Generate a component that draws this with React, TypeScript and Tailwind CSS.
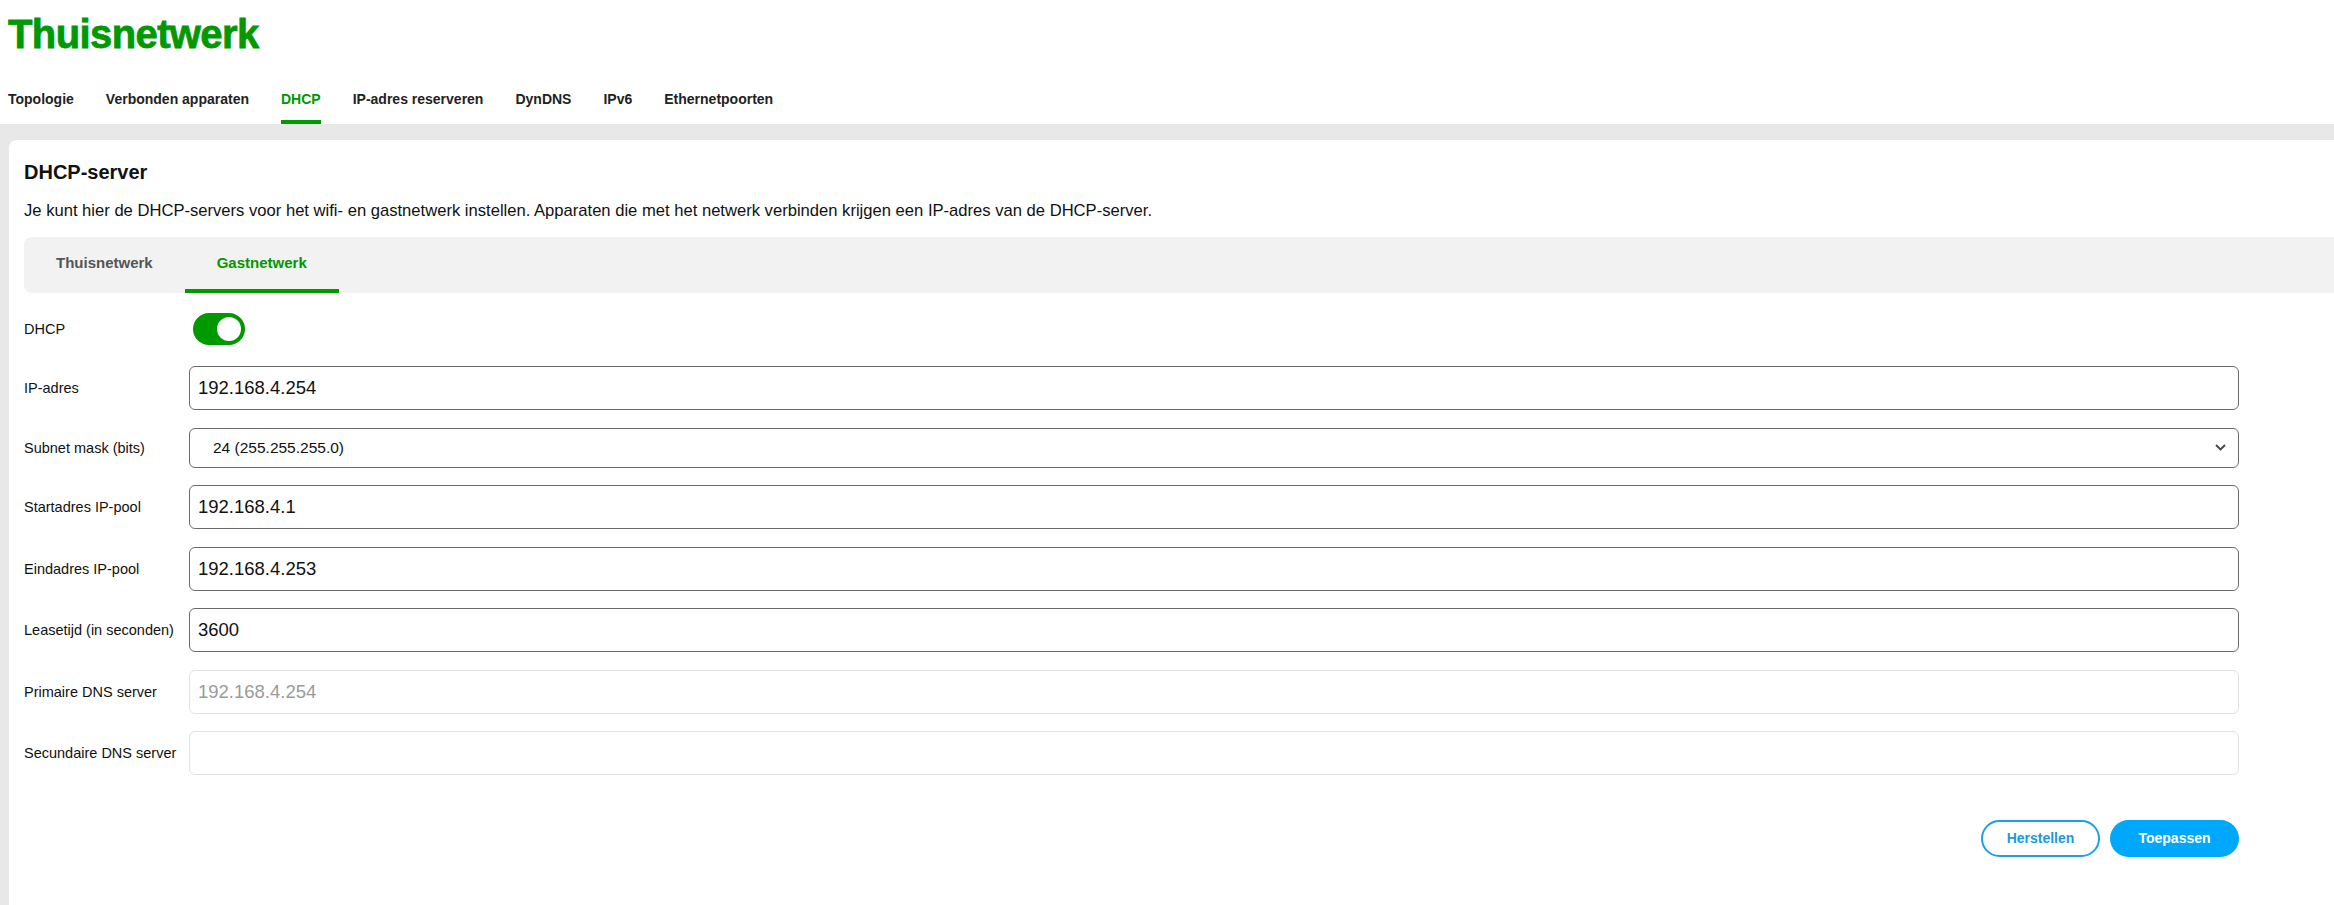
import React from "react";

const navItems = [
  "Topologie",
  "Verbonden apparaten",
  "DHCP",
  "IP-adres reserveren",
  "DynDNS",
  "IPv6",
  "Ethernetpoorten",
];

function Row({ label, children }: { label: string; children: React.ReactNode }) {
  return (
    <div className="flex items-center">
      <div className="w-[165px] shrink-0 text-[14.5px] leading-[20px] text-[#111]">{label}</div>
      {children}
    </div>
  );
}

function TextInput({ value, disabled, light }: { value: string; disabled?: boolean; light?: boolean }) {
  return (
    <input
      readOnly
      disabled={disabled}
      defaultValue={value}
      className={
        light
          ? "h-[44px] flex-1 rounded-[6px] border border-[#e2e2e2] bg-white px-[8px] text-[18.5px] text-[#9a9a9a] outline-none"
          : "h-[44px] flex-1 rounded-[6px] border border-[#6b6b6b] bg-white px-[8px] text-[18.5px] text-[#111] outline-none"
      }
    />
  );
}

export default function App() {
  return (
    <div className="flex h-[905px] w-[2334px] flex-col overflow-hidden bg-white font-['Liberation_Sans',Arial,sans-serif]">
      <header className="pl-[8px] pt-[14px]">
        <h1 className="text-[40px] font-bold leading-[40px] tracking-[-0.6px] text-[#009900] [-webkit-text-stroke:0.8px_#009900]">
          Thuisnetwerk
        </h1>
        <nav className="mt-[35px] flex gap-[32px]">
          {navItems.map((n) =>
            n === "DHCP" ? (
              <div key={n} className="border-b-4 border-[#009900] pb-[11px] text-[14px] font-bold leading-[20px] text-[#009900]">
                {n}
              </div>
            ) : (
              <div key={n} className="border-b-4 border-transparent pb-[11px] text-[14px] font-bold leading-[20px] text-[#222]">
                {n}
              </div>
            )
          )}
        </nav>
      </header>

      <main className="flex flex-1 flex-col bg-[#e8e8e8] pl-[9px] pt-[16px]">
        <section className="w-[2400px] flex-1 rounded-tl-[8px] bg-white pl-[15px] pt-[18px]">
          <h2 className="text-[20px] font-bold leading-[28px] text-[#111]">DHCP-server</h2>
          <p className="mt-[13px] text-[16.6px] leading-[24px] text-[#111]">
            Je kunt hier de DHCP-servers voor het wifi- en gastnetwerk instellen. Apparaten die met het netwerk verbinden krijgen een IP-adres van de DHCP-server.
          </p>

          <div className="mt-[14px] flex h-[56px] w-[2330px] rounded-l-[8px] bg-[#f2f2f2]">
            <div className="flex items-center border-b-4 border-transparent px-8 text-[15px] font-bold leading-[20px] text-[#555]">
              Thuisnetwerk
            </div>
            <div className="flex items-center border-b-4 border-[#009900] px-8 text-[15px] font-bold leading-[20px] text-[#009900]">
              Gastnetwerk
            </div>
          </div>

          <div className="mt-[20px] flex w-[2215px] flex-col">
            <div className="flex h-[32px] items-center">
              <div className="w-[165px] shrink-0 text-[14.5px] leading-[20px] text-[#111]">DHCP</div>
              <div className="ml-[4px] flex h-[32px] w-[52px] items-center justify-end rounded-full bg-[#009900] p-[4px]">
                <div className="h-[24px] w-[24px] rounded-full bg-white" />
              </div>
            </div>

            <div className="mt-[21px] flex flex-col gap-[17.5px]">
              <Row label="IP-adres">
                <TextInput value="192.168.4.254" />
              </Row>
              <Row label="Subnet mask (bits)">
                <div className="flex h-[40px] flex-1 items-center justify-between rounded-[6px] border border-[#6b6b6b] bg-white pl-[23px] pr-[12px]">
                  <span className="text-[15.5px] text-[#111]">24 (255.255.255.0)</span>
                  <svg width="11" height="7" viewBox="0 0 11 7" fill="none">
                    <path d="M1 1l4.5 4.5L10 1" stroke="#444" strokeWidth="1.8" />
                  </svg>
                </div>
              </Row>
              <Row label="Startadres IP-pool">
                <TextInput value="192.168.4.1" />
              </Row>
              <Row label="Eindadres IP-pool">
                <TextInput value="192.168.4.253" />
              </Row>
              <Row label="Leasetijd (in seconden)">
                <TextInput value="3600" />
              </Row>
              <Row label="Primaire DNS server">
                <TextInput value="192.168.4.254" disabled light />
              </Row>
              <Row label="Secundaire DNS server">
                <TextInput value="" disabled light />
              </Row>
            </div>

            <div className="mt-[45px] flex justify-end gap-[10px]">
              <button className="h-[37px] w-[119px] rounded-full border-2 border-[#1ea0e6] bg-white text-[14px] font-bold text-[#1a9ad9]">
                Herstellen
              </button>
              <button className="h-[37px] w-[129px] rounded-full bg-[#00a8fb] text-[14px] font-bold text-white">
                Toepassen
              </button>
            </div>
          </div>
        </section>
      </main>
    </div>
  );
}
